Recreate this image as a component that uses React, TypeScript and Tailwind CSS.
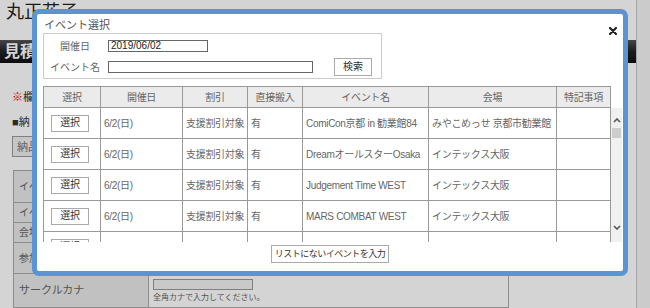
import React from 'react';

const COLS = 'grid grid-cols-[57px_82px_65px_55px_126px_128px_54px]';

const HEADERS = ['選択', '開催日', '割引', '直接搬入', 'イベント名', '会場', '特記事項'];

const EVENTS = [
  { date: '6/2(日)', discount: '支援割引対象', direct: '有', name: 'ComiCon京都 in 勧業館84', venue: 'みやこめっせ 京都市勧業館' },
  { date: '6/2(日)', discount: '支援割引対象', direct: '有', name: 'DreamオールスターOsaka', venue: 'インテックス大阪' },
  { date: '6/2(日)', discount: '支援割引対象', direct: '有', name: 'Judgement Time WEST', venue: 'インテックス大阪' },
  { date: '6/2(日)', discount: '支援割引対象', direct: '有', name: 'MARS COMBAT WEST', venue: 'インテックス大阪' },
  { date: '', discount: '', direct: '', name: '', venue: '' },
];

const PAGE_ROWS = [
  { label: 'イベ', h: 'h-[32px]' },
  { label: 'イベ', h: 'h-[20px]' },
  { label: '会場', h: 'h-[20px]' },
  { label: '参加', h: 'h-[31px]' },
];

const cell = 'border-r border-b border-[#999] flex items-center';

const SelectButton = () => (
  <button className="w-[38px] h-[17px] border border-[#aaa] bg-white text-[10px] text-[#333] leading-none">
    選択
  </button>
);

const Chevron = ({ down }: { down?: boolean }) => (
  <svg width="8" height="5" viewBox="0 0 8 5" className="mx-auto">
    <polyline
      points={down ? '1,1 4,4 7,1' : '1,4 4,1 7,4'}
      fill="none"
      stroke="#555"
      strokeWidth="1.6"
    />
  </svg>
);

const App: React.FC = () => {
  return (
    <div className="relative w-[650px] h-[308px] overflow-hidden bg-[#f4f4f4] font-['Liberation_Sans','Noto_Sans_CJK_JP',sans-serif]">
      {/* Page underneath (only its edges show) */}
      <div className="w-[637px] h-full bg-white border-r border-[#c8c8c8]">
        <div className="h-[40px] pl-[6px] pt-[1px] flex items-start">
          <span className="text-[18px] leading-[22px] text-[#222]">丸正花子</span>
          <span className="text-[8px] text-[#666] mt-[11px] ml-[3px]">さんのページ</span>
        </div>
        <div className="h-[23px] bg-gradient-to-b from-[#555] via-[#222] to-[#111] pl-[4px] flex items-center text-white text-[16px] font-bold">
          見積
        </div>
        <div className="pl-[12px] pt-[27px] text-[11px] leading-[14px] text-[#333]">
          <p>
            <span className="text-[#e00]">※</span>欄
          </p>
          <p className="mt-[11px]">■納</p>
          <button className="mt-[7px] h-[21px] w-[40px] text-left px-[4px] border border-[#999] bg-[#eee] text-[#777] text-[11px]">
            納品
          </button>
        </div>
        <div className="ml-[13px] mt-[13px] w-[496px] border-l border-t border-[#aaa] text-[10px] text-[#666]">
          {PAGE_ROWS.map((r, i) => (
            <div key={i} className={`flex ${r.h}`}>
              <div className="w-[135px] bg-[#e8e8e8] border-r border-b border-[#aaa] flex items-center pl-[5px]">
                {r.label}
              </div>
              <div className="flex-1 border-r border-b border-[#aaa]" />
            </div>
          ))}
          <div className="flex h-[34px]">
            <div className="w-[135px] bg-[#e8e8e8] border-r border-b border-[#aaa] flex items-center pl-[5px] text-[11px]">
              サークルカナ
            </div>
            <div className="flex-1 border-r border-b border-[#aaa] pl-[4px] pt-[5px]">
              <div className="w-[100px] h-[11px] border border-[#999] bg-[#f2f2f2]" />
              <p className="text-[8px] leading-[12px] mt-[2px] text-[#666]">全角カナで入力してください。</p>
            </div>
          </div>
        </div>
      </div>

      {/* Dim overlay */}
      <div className="absolute inset-0 bg-black/[0.17]" />

      {/* Modal */}
      <div className="absolute left-[32px] top-[9px] w-[596px] h-[267px] border-[5px] border-[#5b94d4] rounded-[7px] bg-white flex flex-col text-[#666]">
        <button className="absolute right-[6px] top-[13px]" aria-label="close">
          <svg width="8" height="8" viewBox="0 0 8 8">
            <path d="M1 1 L7 7 M7 1 L1 7" stroke="#222" strokeWidth="2.2" strokeLinecap="round" />
          </svg>
        </button>

        <h2 className="pl-[7px] pt-[4px] text-[11px] leading-[14px] text-[#555]">イベント選択</h2>

        {/* Search box */}
        <div className="ml-[6px] mt-[1px] w-[339px] h-[46px] border border-[#ccc] pt-[6px] text-[10px]">
          <div className="flex items-center h-[12px]">
            <span className="w-[62px] text-center">開催日</span>
            <div className="ml-[2px] w-[100px] h-[12px] border border-[#666] flex items-center pl-[2px] text-[10px] text-[#222] leading-none">
              2019/06/02
            </div>
          </div>
          <div className="flex items-center h-[18px] mt-[6px]">
            <span className="w-[62px] text-center">イベント名</span>
            <div className="ml-[2px] w-[205px] h-[12px] border border-[#666]" />
            <button className="ml-[21px] w-[38px] h-[18px] border border-[#aaa] bg-white text-[10px] text-[#333] leading-none">
              検索
            </button>
          </div>
        </div>

        {/* Event table */}
        <div className="ml-[6px] mt-[7px] text-[10px] tracking-[-0.3px]">
          <div className={`${COLS} w-[568px] border-l border-t border-[#999] bg-[#ebebeb]`}>
            {HEADERS.map((h) => (
              <div key={h} className={`${cell} justify-center h-[21px]`}>
                {h}
              </div>
            ))}
          </div>
          <div className="flex h-[134px]">
            <div className="w-[568px] h-full overflow-hidden border-l border-[#999]">
              {EVENTS.map((e, i) => (
                <div key={i} className={COLS}>
                  <div className={`${cell} h-[31px] pl-[7px]`}>
                    <SelectButton />
                  </div>
                  <div className={`${cell} pl-[3px]`}>{e.date}</div>
                  <div className={`${cell} pl-[3px]`}>{e.discount}</div>
                  <div className={`${cell} pl-[3px]`}>{e.direct}</div>
                  <div className={`${cell} pl-[3px] whitespace-nowrap`}>{e.name}</div>
                  <div className={`${cell} pl-[3px] whitespace-nowrap`}>{e.venue}</div>
                  <div className={cell} />
                </div>
              ))}
            </div>
            <div className="w-[11px] h-full bg-[#f0f0f0] flex flex-col pt-[10px] pb-[12px]">
              <Chevron />
              <div className="mt-[5px] mx-auto w-[9px] h-[10px] bg-[#cdcdcd]" />
              <div className="flex-1" />
              <Chevron down />
            </div>
          </div>
        </div>

        <button className="self-center mt-[3px] h-[18px] px-[3px] border border-[#aaa] bg-white text-[9px] text-[#333] leading-none whitespace-nowrap tracking-[-0.5px]">
          リストにないイベントを入力
        </button>
      </div>
    </div>
  );
};

export default App;
